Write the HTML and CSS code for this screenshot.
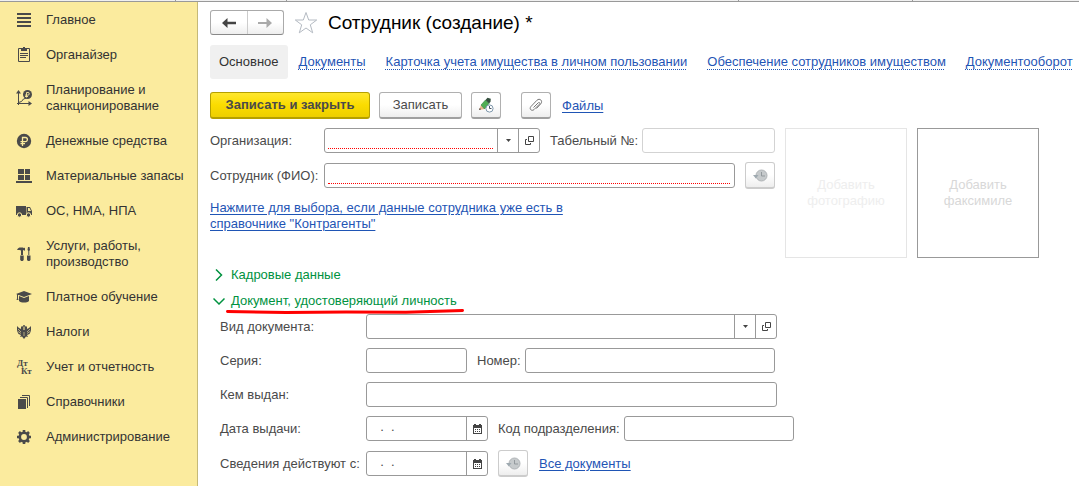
FILE: index.html
```
<!DOCTYPE html>
<html lang="ru">
<head>
  <meta charset="UTF-8">
  <meta name="viewport" content="width=device-width, initial-scale=1.0">
  <title>Сотрудник (создание)</title>
  <link rel="stylesheet" href="styles.css">
</head>
<body>
  <!-- shared icons -->
  <svg class="sprite" aria-hidden="true">
    <symbol id="icon-open" viewBox="0 0 9 9">
      <path d="M3.5.5h5v5h-5zM2 3.5H.5v5h5V7" fill="none" stroke="#444"/>
    </symbol>
    <symbol id="icon-arrow" viewBox="0 0 5 3">
      <path d="M0 0h5L2.5 3z" fill="#444"/>
    </symbol>
    <symbol id="icon-calendar" viewBox="0 0 9 10">
      <path d="M0 1h1V0h2v1h3V0h2v1h1v9H0zM1 4v5h7V4z" fill="#444" fill-rule="evenodd"/>
      <path d="M2 5h1v1H2zM4 5h1v1H4zM6 5h1v1H6zM2 7h1v1H2zM4 7h1v1H4zM6 7h1v1H6z" fill="#444"/>
    </symbol>
    <symbol id="icon-history" viewBox="0 0 15 13">
      <circle cx="8.500" cy="6.500" r="5.500" fill="#c6cacc" stroke="#b0b4b7"/>
      <path d="M8.500 3v4H12" fill="none" stroke="#93999d"/>
      <path d="M0 6h5.500L2.800 9.500z" fill="#9ea9b0"/>
    </symbol>
  </svg>

  <div class="topbar"><span></span><span></span><span></span><span></span></div>

  <div class="layout">
    <nav class="sidebar">
      <a href="#">
        <svg viewBox="0 0 16 16"><path d="M1 1h14v2H1zM1 5h14v2H1zM1 9h14v2H1zM1 13h14v2H1z"/></svg>
        <span>Главное</span>
      </a>
      <a href="#">
        <svg viewBox="0 0 16 16"><path d="M5 1h2V0h2v1h2v3H5z"/><path d="M5 1.500H2.500v13h11v-13H11M4 6.500h8M4 8.500h8M4 10.500h6" fill="none" stroke="#4a4a4a"/></svg>
        <span>Органайзер</span>
      </a>
      <a href="#">
        <svg viewBox="0 0 16 16"><path d="M2.500 1v14M1 13.500h13M2.500 12.500l3-1 2-2.500 3-1" fill="none" stroke="#4a4a4a"/><path d="M0 3.500L2.500 0 5 3.500zM12.500 11l3.500 2.500-3.500 2.500z"/><circle cx="11.500" cy="4.500" r="4.500"/><path d="M10.500 7.500V2.500h1.500a1.300 1.300 0 0 1 0 2.600H9M9 6.500h3" fill="none" stroke="#fbeb9e" stroke-width=".9"/></svg>
        <span>Планирование и санкционирование</span>
      </a>
      <a href="#">
        <svg viewBox="0 0 16 16"><circle cx="8" cy="8" r="7.200"/><path d="M6.500 13V4.500h2.800a2.100 2.100 0 0 1 0 4.200H4.500M4.500 10.700H9" fill="none" stroke="#fbeb9e" stroke-width="1.300"/></svg>
        <span>Денежные средства</span>
      </a>
      <a href="#">
        <svg viewBox="0 0 16 16"><path d="M2 1h6v5H2zM9 1h5v5H9zM2 7h6v5H2zM9 7h5v5H9zM0 13h16v2H0z"/></svg>
        <span>Материальные запасы</span>
      </a>
      <a href="#">
        <svg viewBox="0 0 16 16"><path d="M0 3h10v9H0z"/><path d="M10.500 4H14l2 4v4h-5.500zM12 5v3h3l-1.500-3z" fill-rule="evenodd"/><circle cx="3.500" cy="12" r="2.200" stroke="#fbeb9e"/><circle cx="12.500" cy="12" r="2.200" stroke="#fbeb9e"/></svg>
        <span>ОС, НМА, НПА</span>
      </a>
      <a href="#">
        <svg viewBox="0 0 16 16"><path d="M1 4c1-2 2-2.500 3.500-2.500H7l1 .7L9 1.500V5L7.800 4 7 4.500V9H5V4.500L3.500 4zM4.200 9.500h3.500v4.500l-1 1H5.200l-1-1zM12 1h1.500l.5 3-.7 1v4h-1V5l-.8-1zM11 9.500h3.500v4.500l-1 1H12l-1-1z"/></svg>
        <span>Услуги, работы, производство</span>
      </a>
      <a href="#">
        <svg viewBox="0 0 16 16"><path d="M8 2l8 3-8 3-8-3zM3 7l5 2 5-2v5c-2 2-8 2-10 0zM1 5h1v4.500l.5 1.500h-2L1 9.500z"/></svg>
        <span>Платное обучение</span>
      </a>
      <a href="#">
        <svg viewBox="0 0 16 16"><path d="M1 2l2 2 2 1V3l1-1 1.500 1v3h1V3L10 2l1 1v2l2-1 2-2v4l-.5 2-1 2L11 11l1 2-2-.5L8 15l-2-2.500L4 13l1-2-2.500-1-1-2L1 6z"/><path d="M2 5l3 3M2 7.500l3 2M14 5l-3 3M14 7.500l-3 2M7 9h2M7 11h2" stroke="#fbeb9e" stroke-width=".6"/><circle cx="8" cy="2" r="1"/></svg>
        <span>Налоги</span>
      </a>
      <a href="#">
        <svg class="letters" viewBox="0 0 16 16"><text x="1" y="7">Дт</text><text x="5" y="15">Кт</text></svg>
        <span>Учет и отчетность</span>
      </a>
      <a href="#">
        <svg viewBox="0 0 16 16"><path d="M2 5h8v10H2z"/><path d="M4 3.500h7.500V14M6 1.500h7.500V12" fill="none" stroke="#4a4a4a"/></svg>
        <span>Справочники</span>
      </a>
      <a href="#">
        <svg viewBox="0 0 16 16"><circle cx="8" cy="8" r="4.200" fill="none" stroke="#4a4a4a" stroke-width="2.600"/><path d="M8 1v2.500M8 12.500V15M1 8h2.500M12.500 8H15M3 3l2 2M11 11l2 2M13 3l-2 2M3 13l2-2" stroke="#4a4a4a" stroke-width="2.600"/></svg>
        <span>Администрирование</span>
      </a>
    </nav>

    <main class="content">
      <header class="page-head">
        <div class="nav-buttons">
          <button type="button" aria-label="Назад"><svg width="14" height="10" viewBox="0 0 14 10"><path d="M0 5l5.500-5v3.700H14v2.600H5.500V10z" fill="#444"/></svg></button>
          <button type="button" aria-label="Вперед"><svg width="14" height="10" viewBox="0 0 14 10"><path d="M14 5L8.500 0v4H0v2h8.500v4z" fill="#aaa"/></svg></button>
        </div>
        <svg class="star" viewBox="0 0 24 24"><path d="M12 1.500l2.700 7.500h8l-6.400 4.800 2.400 8L12 17l-6.700 4.800 2.400-8L1.300 9h8z" fill="none" stroke="#b4bac2"/></svg>
        <h1>Сотрудник (создание) *</h1>
      </header>

      <nav class="tabs">
        <a class="active" href="#">Основное</a>
        <a href="#">Документы</a>
        <a href="#">Карточка учета имущества в личном пользовании</a>
        <a href="#">Обеспечение сотрудников имуществом</a>
        <a href="#">Документооборот</a>
      </nav>

      <div class="commands">
        <button class="btn btn-primary" type="button">Записать и закрыть</button>
        <button class="btn btn-save" type="button">Записать</button>
        <button class="btn btn-icon" type="button" aria-label="Изменить">
          <svg width="16" height="16" viewBox="0 0 16 16"><path d="M1 13l2-5 4 4z" fill="#e8b58f"/><path d="M1 13l.8-2 1.300 1.300z" fill="#333"/><path d="M3 8l4.500-5L11 6.500 6.500 12z" fill="#4fae54" stroke="#2f7f3a" stroke-width=".6"/><path d="M7.500 3L9.500.7l3.300 1-.3 3L11 6.500z" fill="#35503f"/><circle cx="11.500" cy="11.500" r="3.600" fill="#fff" stroke="#7d96ab"/><path d="M11.500 9v2.500h2" fill="none" stroke="#456"/></svg>
        </button>
        <button class="btn btn-icon btn-clip" type="button" aria-label="Присоединить файл">
          <svg width="14" height="14" viewBox="0 0 14 14"><path d="M4.500 9.500L9 5c1.300-1.300 2.500 0 1.300 1.300L5 11.600C2.800 13.600-.2 11 1.900 8.600l6-6.300c2.800-2.700 6.400.6 3.800 3.600L7.500 10.500" fill="none" stroke="#777"/></svg>
        </button>
        <a class="link" href="#">Файлы</a>
      </div>

      <form>
        <div class="person">
          <div class="person-fields">
            <div class="row">
              <label class="label-main" for="org">Организация:</label>
              <div class="field field-org required">
                <input type="text" id="org">
                <button type="button" aria-label="Выбрать"><svg width="5" height="3"><use href="#icon-arrow"/></svg></button>
                <button type="button" aria-label="Открыть"><svg width="9" height="9"><use href="#icon-open"/></svg></button>
              </div>
              <label class="label-next" for="number">Табельный №:</label>
              <div class="field field-fill disabled"><input type="text" id="number" disabled></div>
            </div>
            <div class="row">
              <label class="label-main" for="fio">Сотрудник (ФИО):</label>
              <div class="field field-fill required"><input type="text" id="fio"></div>
              <button class="btn btn-icon btn-history" type="button" aria-label="История" disabled><svg width="15" height="13"><use href="#icon-history"/></svg></button>
            </div>
            <a class="link link-hint" href="#">Нажмите для выбора, если данные сотрудника уже есть в справочнике "Контрагенты"</a>
          </div>
          <button class="picture" type="button" disabled>Добавить фотографию</button>
          <button class="picture" type="button">Добавить факсимиле</button>
        </div>

        <button class="group-title" type="button" aria-expanded="false">
          <svg width="12" height="12" viewBox="0 0 12 12"><path d="M3 0.500L8.500 6 3 11.500"/></svg>
          <span>Кадровые данные</span>
        </button>
        <button class="group-title" type="button" aria-expanded="true">
          <svg width="12" height="12" viewBox="0 0 12 12"><path d="M0.500 3.500L6 9l5.500-5.500"/></svg>
          <span>Документ, удостоверяющий личность</span>
          <svg class="marker" viewBox="0 0 238 6" preserveAspectRatio="none"><path d="M1.500 3.500L60 4.500 120 4l60 .3L236.500 2.500"/></svg>
        </button>

        <div class="group-body">
          <div class="row">
            <label class="label-group" for="kind">Вид документа:</label>
            <div class="field field-wide">
              <input type="text" id="kind">
              <button type="button" aria-label="Выбрать"><svg width="5" height="3"><use href="#icon-arrow"/></svg></button>
              <button type="button" aria-label="Открыть"><svg width="9" height="9"><use href="#icon-open"/></svg></button>
            </div>
          </div>
          <div class="row">
            <label class="label-group" for="series">Серия:</label>
            <div class="field field-series"><input type="text" id="series"></div>
            <label class="label-next" for="doc-number">Номер:</label>
            <div class="field field-number"><input type="text" id="doc-number"></div>
          </div>
          <div class="row">
            <label class="label-group" for="issuer">Кем выдан:</label>
            <div class="field field-wide"><input type="text" id="issuer"></div>
          </div>
          <div class="row">
            <label class="label-group" for="issued">Дата выдачи:</label>
            <div class="field field-date">
              <input type="text" id="issued" value="  .  .">
              <button type="button" aria-label="Календарь"><svg width="9" height="10"><use href="#icon-calendar"/></svg></button>
            </div>
            <label class="label-next" for="code">Код подразделения:</label>
            <div class="field field-code"><input type="text" id="code"></div>
          </div>
          <div class="row">
            <label class="label-group" for="since">Сведения действуют с:</label>
            <div class="field field-date">
              <input type="text" id="since" value="  .  .">
              <button type="button" aria-label="Календарь"><svg width="9" height="10"><use href="#icon-calendar"/></svg></button>
            </div>
            <button class="btn btn-icon btn-history" type="button" aria-label="История" disabled><svg width="15" height="13"><use href="#icon-history"/></svg></button>
            <a class="link link-all" href="#">Все документы</a>
          </div>
        </div>
      </form>
    </main>
  </div>
</body>
</html>
```
FILE: styles.css
```
* {
  box-sizing: border-box;
}

body {
  margin: 0;
  min-height: 100vh;
  display: flex;
  flex-direction: column;
  background: #fff;
  color: #4a4a4a;
  font-family: "Liberation Sans", Arial, sans-serif;
  font-size: 13px;
  line-height: 16px;
}

button,
input {
  font: inherit;
  color: inherit;
}

button {
  padding: 0;
  border: none;
  background: none;
  cursor: pointer;
}

.sprite {
  position: absolute;
  width: 0;
  height: 0;
}

.topbar {
  display: grid;
  grid-template-columns: 176px 111px 452px 174px;
  height: 2px;
  background: #f0f0f0;
  border-bottom: 1px solid #999;
}

.topbar span {
  border-right: 1px solid #999;
}

.layout {
  flex: 1;
  display: flex;
}

/* Sidebar */

.sidebar {
  flex: none;
  width: 198px;
  background: #fbeb9e;
  border-right: 1px solid #c5b978;
}

.sidebar a {
  display: flex;
  align-items: center;
  gap: 14px;
  padding: 10px 8px 9px 16px;
  color: #333;
  text-decoration: none;
}

.sidebar a:hover {
  background: #f7e07a;
}

.sidebar svg {
  flex: none;
  width: 16px;
  height: 16px;
  fill: #4a4a4a;
}

.sidebar .letters {
  font-family: "Liberation Serif", serif;
  font-size: 9px;
  font-weight: bold;
}

/* Header */

.content {
  flex: 1;
  min-width: 0;
  padding: 8px 8px 8px 12px;
}

.page-head {
  display: flex;
  align-items: center;
  height: 25px;
}

.nav-buttons {
  display: flex;
  width: 74px;
  height: 25px;
  border: 1px solid #aaa;
  border-bottom-color: #888;
  border-radius: 3px;
  background: linear-gradient(#fff 50%, #eee);
}

.nav-buttons button {
  flex: 1;
  display: flex;
  align-items: center;
  justify-content: center;
}

.nav-buttons button + button {
  border-left: 1px solid #ccc;
}

.star {
  width: 24px;
  height: 24px;
  margin: 0 10px;
}

h1 {
  margin: 0;
  color: #000;
  font-size: 19px;
  font-weight: normal;
  line-height: 24px;
}

.tabs {
  display: flex;
  align-items: center;
  gap: 20px;
  margin-top: 10px;
  white-space: nowrap;
}

.tabs a {
  color: #1f55b5;
  text-decoration: underline dotted 1px;
  text-underline-offset: 3px;
}

.tabs .active {
  margin-right: -9px;
  padding: 9px;
  border-radius: 3px;
  background: #f0f0f0;
  color: #333;
  text-decoration: none;
}

.link {
  color: #1f55b5;
  text-underline-offset: 2px;
}

/* Buttons */

.commands {
  display: flex;
  align-items: center;
  margin-top: 13px;
}

.btn {
  display: flex;
  align-items: center;
  justify-content: center;
  height: 27px;
  border: 1px solid #b0b0b0;
  border-bottom: 2px solid #a0a0a0;
  border-radius: 3px;
  background: linear-gradient(#fff 50%, #eee);
}

.btn-primary {
  width: 160px;
  border-color: #b5a000;
  background: linear-gradient(#ffe72e, #fbdc00 50%, #edcf00);
  font-weight: bold;
}

.btn-save {
  width: 83px;
  margin: 0 9px;
}

.btn-icon {
  flex: none;
  width: 30px;
}

.btn-clip {
  margin: 0 11px 0 20px;
}

.btn-history {
  margin-left: 10px;
}

.btn:disabled {
  border-color: #ccc;
  cursor: default;
}

/* Form */

.person {
  display: flex;
  align-items: flex-start;
  gap: 10px;
  margin-top: 9px;
}

.person-fields {
  width: 565px;
}

.row {
  display: flex;
  align-items: center;
}

.row + .row {
  margin-top: 9px;
}

.label-main {
  width: 114px;
}

.label-group {
  width: 146px;
}

.label-main,
.label-group,
.label-next {
  flex: none;
  white-space: nowrap;
}

.label-next {
  margin: 0 4px 0 10px;
}

.field {
  display: flex;
  height: 25px;
  border: 1px solid #999;
  border-radius: 3px;
  background: #fff;
}

.field input {
  flex: 1;
  width: 100%;
  min-width: 0;
  margin: 0 4px 3px 3px;
  padding: 0;
  border: none;
  outline: none;
  background: none;
}

.field.required input {
  border-bottom: 1px dotted #f00;
}

.field button {
  flex: none;
  display: flex;
  align-items: center;
  justify-content: center;
  width: 21px;
  border-left: 1px solid #999;
}

.field.disabled {
  border-color: #d3d3d3;
}

.field-fill {
  flex: 1;
  min-width: 0;
}

.field-org {
  flex: none;
  width: 216px;
}

.field-wide {
  width: 411px;
}

.field-series {
  width: 101px;
}

.field-number {
  width: 250px;
}

.field-date {
  width: 122px;
}

.field-date input {
  padding-left: 3px;
}

.field-code {
  width: 170px;
}

.link-hint {
  display: block;
  width: 365px;
  margin-top: 11px;
}

.link-all {
  margin-left: 11px;
}

.picture {
  width: 122px;
  height: 130px;
  padding: 0 20px;
  border: 1px solid #999;
  color: #d8d8d8;
}

.picture:disabled {
  border-color: #e5e5e5;
  color: #eee;
}

/* Collapsible groups */

.group-title {
  position: relative;
  display: flex;
  align-items: center;
  gap: 6px;
  margin: 9px 0 0 3px;
  color: #00923f;
}

.group-title + .group-title {
  margin-top: 10px;
}

.group-title path {
  fill: none;
  stroke: #00923f;
  stroke-width: 1.5;
}

.group-title .marker {
  position: absolute;
  left: 13px;
  top: 15px;
  width: 238px;
  height: 6px;
}

.group-title .marker path {
  stroke: #f00;
  stroke-width: 3;
  stroke-linecap: round;
}

.group-body {
  margin: 5px 0 0 10px;
}
```
